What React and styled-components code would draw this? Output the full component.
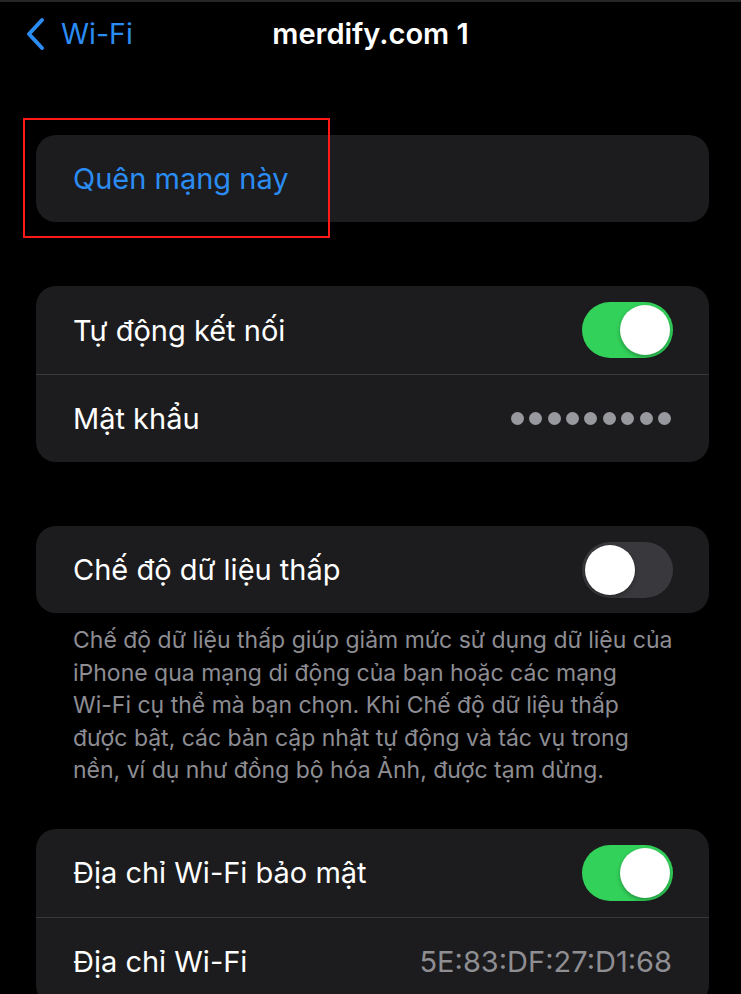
import React from 'react';
import styled, { createGlobalStyle } from 'styled-components';

const GlobalStyle = createGlobalStyle`
    body {
        margin: 0;
        background: #000;
        font-family: Inter, "Noto Sans", sans-serif;
        -webkit-font-smoothing: antialiased;
    }
`;

const Screen = styled.div`
    width: 741px;
    height: 994px;
    overflow: hidden;
    background: #000;
    border-top: 2px solid #262628;
    box-sizing: border-box;
`;

const Header = styled.div`
    height: 63px;
    display: grid;
    grid-template-columns: 1fr auto 1fr;
    align-items: center;
    padding: 0 24px;
`;

const Back = styled.div`
    display: flex;
    align-items: center;
    gap: 15px;
    color: #2b8cf3;
    font-size: 28.5px;
`;

const Title = styled.div`
    color: #fff;
    font-size: 29px;
    font-weight: 600;
`;

const Content = styled.div`
    padding: 70px 32px 0 36px;
    display: flex;
    flex-direction: column;
`;

const Group = styled.div`
    position: relative;
    background: #1c1c1e;
    border-radius: 20px;
    margin-bottom: ${p => p.$gap ?? 64}px;
`;

const Highlight = styled.div`
    position: absolute;
    left: -13px;
    top: -17px;
    width: 307px;
    height: 120px;
    border: 2px solid #ff1a1a;
    box-sizing: border-box;
    pointer-events: none;
`;

const Row = styled.div`
    height: ${p => p.$h || 88}px;
    display: flex;
    align-items: center;
    justify-content: space-between;
    padding: 0 ${p => p.$right || 36}px 0 37px;
    & + & {
        border-top: 1px solid #38383a;
        height: 87px;
    }
`;

const Label = styled.span`
    color: ${p => p.$blue ? '#2b8cf3' : '#fff'};
    font-size: 29px;
`;

const Value = styled.span`
    color: #8e8e93;
    font-size: 29px;
`;

const Track = styled.div`
    width: 91px;
    height: 56px;
    border-radius: 28px;
    background: ${p => p.$on ? '#32d15a' : '#39393d'};
    display: flex;
    align-items: center;
    justify-content: ${p => p.$on ? 'flex-end' : 'flex-start'};
    padding: 0 3px;
    box-sizing: border-box;
`;

const Knob = styled.div`
    width: 50px;
    height: 50px;
    border-radius: 50%;
    background: #fff;
    box-shadow: 0 2px 4px rgba(0,0,0,0.3);
`;

const Dots = styled.div`
    display: flex;
    gap: 5.4px;
`;

const Dot = styled.span`
    width: 13px;
    height: 13px;
    border-radius: 50%;
    background: #98989f;
`;

const Footer = styled.p`
    margin: 11px 20px 42px 37px;
    color: #8d8d93;
    font-size: 23px;
    line-height: 32.5px;
    white-space: nowrap;
`;

const footerLines = [
    'Chế độ dữ liệu thấp giúp giảm mức sử dụng dữ liệu của',
    'iPhone qua mạng di động của bạn hoặc các mạng',
    'Wi-Fi cụ thể mà bạn chọn. Khi Chế độ dữ liệu thấp',
    'được bật, các bản cập nhật tự động và tác vụ trong',
    'nền, ví dụ như đồng bộ hóa Ảnh, được tạm dừng.',
];

const Toggle = ({ on }) => (
    <Track $on={on}><Knob /></Track>
);

const App = () => {
    return (
        <Screen>
            <GlobalStyle />
            <Header>
                <Back>
                    <svg width="22" height="34" viewBox="0 0 22 34">
                        <path d="M18 3 L5 17 L18 31" fill="none" stroke="#2b8cf3" strokeWidth="4" strokeLinecap="round" strokeLinejoin="round" />
                    </svg>
                    Wi-Fi
                </Back>
                <Title>merdify.com 1</Title>
                <div />
            </Header>
            <Content>
                <Group>
                    <Row $h={87}>
                        <Label $blue>Quên mạng này</Label>
                    </Row>
                    <Highlight />
                </Group>
                <Group>
                    <Row>
                        <Label>Tự động kết nối</Label>
                        <Toggle on />
                    </Row>
                    <Row $right={38}>
                        <Label>Mật khẩu</Label>
                        <Dots>
                            {Array.from({ length: 9 }).map((_, i) => <Dot key={i} />)}
                        </Dots>
                    </Row>
                </Group>
                <Group $gap={0}>
                    <Row $h={87}>
                        <Label>Chế độ dữ liệu thấp</Label>
                        <Toggle />
                    </Row>
                </Group>
                <Footer>
                    {footerLines.map((line, i) => (
                        <React.Fragment key={i}>{line}{i < footerLines.length - 1 && <br />}</React.Fragment>
                    ))}
                </Footer>
                <Group>
                    <Row>
                        <Label>Địa chỉ Wi-Fi bảo mật</Label>
                        <Toggle on />
                    </Row>
                    <Row $right={37}>
                        <Label>Địa chỉ Wi-Fi</Label>
                        <Value>5E:83:DF:27:D1:68</Value>
                    </Row>
                </Group>
            </Content>
        </Screen>
    );
};

export default App;
